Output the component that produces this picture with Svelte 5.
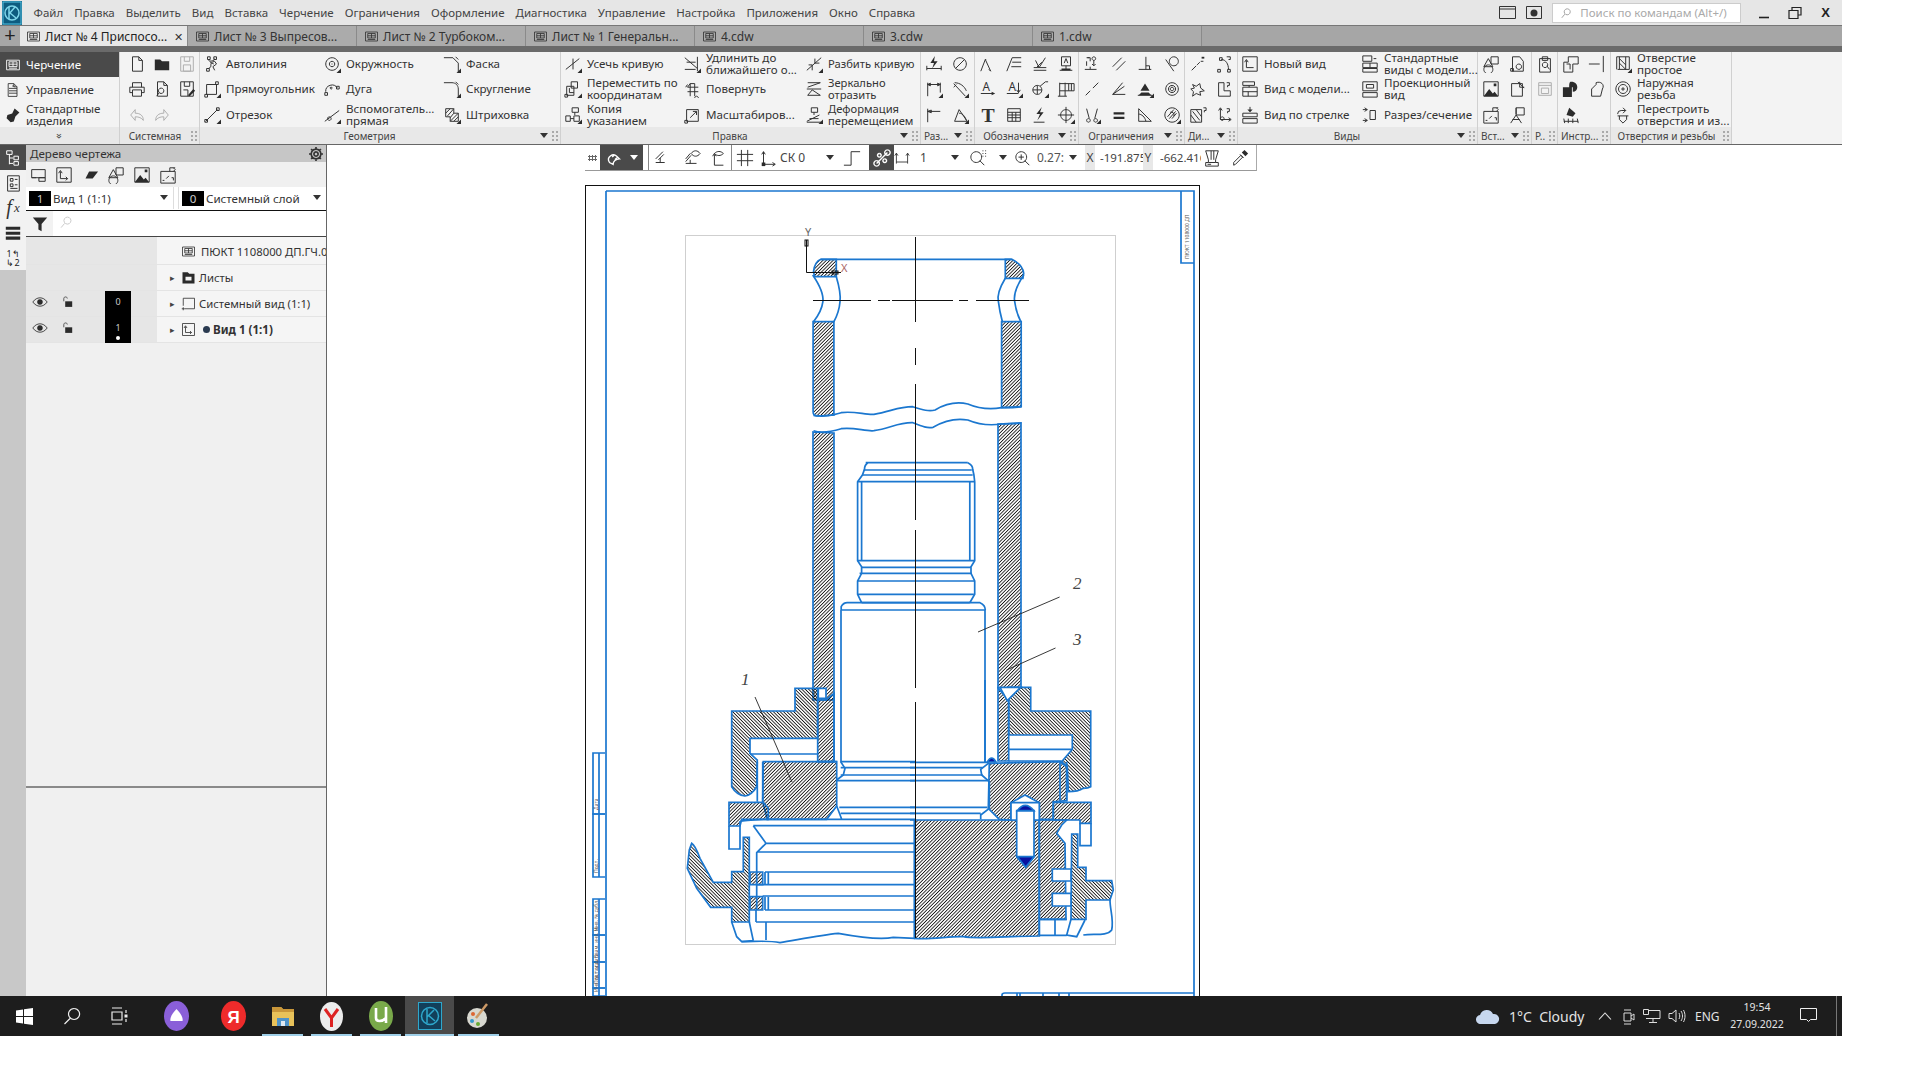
<script>
  const menu = ['Файл','Правка','Выделить','Вид','Вставка','Черчение','Ограничения','Оформление','Диагностика','Управление','Настройка','Приложения','Окно','Справка'];
  const tabs = ['Лист № 4 Приспосо...','Лист № 3 Выпресов...','Лист № 2 Турбоком...','Лист № 1 Генеральн...','4.cdw','3.cdw','1.cdw'];

  // 20x20 icons: s = stroke, f = fill
  const I = {
    sheet:{s:'M2 4h16v12H2zM5 6h10v6H5zM5 9h10M10 6v6M5 14h10'},
    doc:{s:'M4 2h7l4 4v12H4zM9 5h3M5 8h10M5 11h10M5 14h10M11 2v4h4'},
    flash:{f:'M12 2l6 5-5 5-2 6-4 1-5-5 1-4 6-2z'},
    page:{s:'M5 2h7l4 4v12H5zM12 2v4h4'},
    folder:{f:'M2 5h6l2 2h8v10H2z'},
    saveg:{s:'M3 2h14v16H3zM7 2v5h6V2M6 11h8v7H6z',g:1},
    print:{s:'M5 8V3h10v5M5 14H2V8h16v6h-3M5 11h10v7H5z'},
    prev:{s:'M5 2h7l4 4v12H5zM12 2v4h4M9 9a3 3 0 1 0 .1 0M7 14l-3 4'},
    saveas:{s:'M3 2h14v16H3zM7 2v5h6V2M6 11h5v7',f:'M11 17l6-7 2 2-6 6z'},
    undo:{s:'M8 4L3 10l5 6v-4c4 0 7 1 9 4 0-5-3-8-9-8z',g:1},
    redo:{s:'M12 4l5 6-5 6v-4c-4 0-7 1-9 4 0-5 3-8 9-8z',g:1},
    auto:{s:'M5 2h3v3H5zM12 2h3v3h-3zM4 15h3v3H4zM7 5c-3 3 7 2 6-1M6 15c6-2-1-6 7-8l2 3-4 3 2 4M8 8l4 2'},
    rect:{s:'M4 5h11v11H4zM2 16h3v3H2zM14 2h3v3h-3z'},
    seg:{s:'M3 17L16 4M2 15h3v3H2zM15 2h3v3h-3z'},
    circ:{s:'M10 3a7 7 0 1 0 .1 0M10 7a3 3 0 1 0 .1 0M9.5 10h1'},
    arc:{s:'M3 13a7 7 0 0 1 13-4M2 14h3v3H2zM15 7h3v3h-3zM9 8a1 1 0 1 0 .1 0'},
    aux:{s:'M2 17L18 5M7 12a2 2 0 1 0 .1 0'},
    chamfer:{s:'M1 3h10l6 6v10M14 2l3 3'},
    round:{s:'M1 3h9c4 0 7 3 7 7v9M14 2l3 3'},
    hatch:{s:'M3 3h9v5h5v9H8v-5H3zM3 8l5-5M5 11l7-8M8 13l4-5M8 17l9-9M12 17l5-5'},
    trim:{s:'M2 16L17 4M10 4v12',g:0},
    movec:{s:'M8 2h7v7H8zM3 7h8v10H3zM1 16h3v3H1zM6 9v5h5'},
    copy:{s:'M9 2h7v5H9zM12 7v3M2 11h5v6H2zM11 11h6v6h-6zM7 14h4'},
    extend:{s:'M2 3l14 12M2 16h12M16 2v16M4 8h10',},
    rotate:{s:'M8 4h5v14M5 8h12M5 13h12M8 4v14M5 8l3-4M15 18a2 2 0 1 0 .1 0M3 8l2-3'},
    scale:{s:'M4 4h13v13H4zM8 13l7-7M11 6h4v4M2 16h3v3H2z'},
    split:{s:'M2 17L18 3M11 4v5M8 11v6M11 9h5M4 11h4'},
    mirror:{s:'M3 3h14L3 8M3 17h14L8 11zM2 10h16'},
    deform:{s:'M7 2h7v5H7zM10 7v3M2 17l14-7M2 18h16M5 14h10'},
    bolt:{s:'M2 17V12M18 17V12M2 15h16',f:'M11 1L6 9h4l-2 6 6-8h-4z'},
    nope:{s:'M10 3a7 7 0 1 0 .1 0M5 15L15 5'},
    dimh:{s:'M3 18V3M17 14V3M3 5h14M3 5l3-1.500v3zM17 5l-3-1.500v3z'},
    dima:{s:'M3 4l13 14M4 3c6 0 11 4 13 9M3 8l3-3'},
    dimb:{s:'M3 18V3M3 6h14M3 6l4-1.500v3z'},
    dimc:{s:'M4 17l5-13 9 13zM9 8c4 0 7 4 8 8'},
    rough:{s:'M2 18l5-13 6 13M7 5l1 0M13 18l-2-2'},
    lead:{s:'M2 18L8 3h10M8 8h10M7 13h11'},
    tol:{s:'M3 17h14M3 14h14M5 6l4 8L16 3M6 14l6-6'},
    base:{s:'M5 2h10v10H5zM8 9l2-5 2 5M10 12v4M3 17h14',f:'M5 15h10v2H5z'},
    texta:{s:'M2 15h13',f:'M14 13l4 2-4 2z',t:'A'},
    textb:{s:'M2 15h13M15 3v11M13 11l2 3 2-3',f:'',t:'A'},
    weld:{s:'M7 6a5 5 0 1 0 .1 0M2 11h10M7 6v10M10 7l6-5h3'},
    gtol:{s:'M3 18V3M9 18V3M3 4h16v8H3M13 4v8M16 4v8M1 18h10'},
    tt:{t2:'T'},
    table:{s:'M3 3h14v14H3zM3 7h14M3 10h14M3 13h14M8 7v10M12 7v10'},
    lightning:{s:'M3 18h12',f:'M12 1L6 9h4l-3 7 7-9h-4z'},
    target:{s:'M10 4a6 6 0 1 0 .1 0M10 1v18M1 10h18'},
    cfix:{s:'M2 16h13M8 16V13M4 3h4v4M5 3h2M12 2a2 2 0 1 0 .1 0M12 6v6M10 10l2 2 2-2M4 7v5'},
    par:{s:'M3 13L13 3M7 17L17 7'},
    perp:{s:'M11 2v14M3 16h14M11 12h4v4'},
    tan:{s:'M3 5l9 13M12 2a5 5 0 1 0 .1 0'},
    colin:{s:'M3 17l5-5M11 9l6-6'},
    ang:{s:'M3 16h14M3 16L16 7M3 16L14 3'},
    fixp:{s:'M2 17h16',f:'M10 4l5 8H5zM3 17l3-3h8l3 3z'},
    conc:{s:'M10 3a7 7 0 1 0 .1 0M10 6a4 4 0 1 0 .1 0M10 8a2 2 0 1 0 .1 0'},
    sym:{s:'M4 3l3 11M16 3l-3 11M6 14a2 2 0 1 0 .1 0M14 14a2 2 0 1 0 .1 0'},
    eq:{f:'M4 7h12v2.500H4zM4 12h12v2.500H4z'},
    tri:{s:'M3 3v14h14zM3 9c3 0 7 3 8 8'},
    hatchc:{s:'M10 2a8 8 0 1 0 .1 0M5 12L12 4M7 14l7-8M10 14l5-6M8 7a3 3 0 0 1 4 4'},
    dq1:{s:'M3 17l5-5M9 11l3-3M13 7h3',f:'M14 2h3v2h-3z'},
    dq2:{s:'M5 3h3v3H5zM3 16h3v3H3zM14 16h3v3h-3zM7 5c5 0 8 5 8 11M13 2h4v3h-2'},
    dq3:{s:'M4 5l4 2 4-3 1 5 4 3-5 1 1 4-5-2-4 3 1-5-3-3 4-1z'},
    dq4:{s:'M4 3h6v9h7v6H4zM13 3h3v3h-2v2'},
    dq5:{s:'M2 4h12v14H2zM4 6l8 10M2 10l6 8M8 4l6 8M16 2h3v3h-2v2'},
    dq6:{s:'M6 3v12h11M4 5l2-3 2 3M15 13l3 2-3 2M8 12a2 2 0 1 0 .1 0M13 3h3v3h-2v2'},
    nview:{s:'M2 2h16v16H2zM6 6v8h8M4 8l2-3 2 3'},
    vmodel:{s:'M2 2h13v4H2zM9 6v2M2 8h16v10H2zM2 13h16M8 13v5'},
    varrow:{s:'M10 1v5M2 8h16v4H2zM2 14h16v5H2z',f:'M7 4h6l-3 3z'},
    std:{s:'M2 1h10v6H2zM14 4l3 0M2 9h16v5H2zM2 15h16v4H2zM10 9v5'},
    proj:{s:'M2 2h16v10H2zM6 5h8v4H6zM2 14h16v5H2z'},
    sect:{s:'M2 4h5M2 16h5M4 2l3 2-3 2M4 14l3 2-3 2M10 5h6v10h-6z'},
    shapes:{s:'M2 13l5-9 5 9zM10 2h8v8h-8zM7 11a5 5 0 1 0 .1 0'},
    image:{s:'M2 2h16v16H2z',f:'M2 18l6-8 4 5 2-2 4 5zM13 4h3v3h-3z'},
    ins:{s:'M2 6h16v13H2zM12 6V2h6M8 14l3-3M4 16h2M14 13h2v3M16 2l2 2-2 2'},
    leaf:{s:'M5 2h8l4 5v11H5zM3 15h3v3H3zM12 10a3 3 0 1 0 .1 0'},
    frag:{s:'M4 4h12v14H4zM11 2l7 7M13 2v6h5',},
    flag:{s:'M9 2h9v8H9zM9 2v7M3 19l6-9 6 9M5 15h8'},
    clip:{s:'M4 4h12v15H4zM7 2h6v4H7zM10 8a3 3 0 1 0 .1 0M12 12l3 4'},
    grayimg:{s:'M3 3h14v14H3zM3 6h14M6 9h8v6H6z',g:1},
    stepi:{s:'M7 2h11v8h-6v9H2V8h5zM5 10h4v6'},
    linei:{s:'M1 10h12M17 1v18'},
    fill2:{f:'M1 8h10v11H1zM10 2c5 0 7 3 7 6 0 3-2 5-5 5V8H8c0-3 0-6 2-6z'},
    poly:{s:'M4 18V10l5-5V3c5-2 10 2 7 7l-2 8z'},
    fill3:{s:'M2 17h16M2 14l1 5M7 14v5M12 14v5M17 14l1 5',f:'M8 2l7 6-3 4-7-2z'},
    hole:{s:'M3 2h14v14M6 2v14M13 2v14M3 2v14M4 16h13M6 4l7 7M6 9l7 7'},
    thread:{s:'M10 2a8 8 0 1 0 .1 0M10 5a5 5 0 1 0 .1 0M8 10h4M10 8v4'},
    rebuild:{s:'M4 11h12M6 11v4l4 4 4-4v-4M10 2l3 3-3 3M13 5H8a4 4 0 0 0-4 4'},
    tree:{s:'M3 2h6v4H3zM6 6v11M6 10h4M6 16h4M11 8h5v4h-5zM11 14h5v4h-5z'},
    mgr:{s:'M4 2h13v17H4zM7 5h3v3H7zM12 6h3M7 11h3v3H7zM12 12h3M7 16h8'},
    bars:{f:'M2 3h16v3.500H2zM2 8.500h16V12H2zM2 14h16v3.500H2z'},
    vstrip:{s:'M3 4h15v9H3zM11 13h7v4h-7zM3 13h5'},
    plane:{f:'M5 14L9 6h10l-6 8z'},
    lock:{s:'M4 9V5c0-3 5-3 5 0',f:'M6 9h10v8H6z'},
    eye:{s:'M1 10c5-7 13-7 18 0-5 7-13 7-18 0z',f:'M10 6.500a3.500 3.500 0 1 1-.1 0z'},
    sysv:{s:'M3 3h15v14H5M3 3v10M1 17h4M3 15v4'},
    view1:{s:'M2 2h16v16H2zM6 6v8h8M4 8l2-3 2 3M12 12l2 2-2 2'},
    folderi:{f:'M2 3h7l2 2h7v13H2zM6 9v5h8V9z'},
    funnel:{f:'M1 2h18l-7 8v9l-4-2v-7z'},
    search:{s:'M12 3a5 5 0 1 0 .1 0M8 12l-5 6'},
    magnet:{s:'M5 15c-4-6 4-11 8-7l3 3c-4 0-7 3-7 6zM11 6l-3 3M14 9l-3 3',w:1},
    tri2:{s:'M3 15h10M8 15v-5M3 11L11 3M6 12L12 6'},
    eyeline:{s:'M3 16h12M8 16v-4M3 11L8 5M3 14L9 7M9 5c3-4 7-4 10 0-3 4-7 4-10 0z'},
    eyeaxis:{s:'M6 6v12h10M4 8l2-3 2 3M6 5c3-3 7-3 10 0-3 3-7 3-10 0z'},
    grid:{s:'M6 1v18M13 1v18M1 6h18M1 13h18'},
    axes:{s:'M5 3v14h13M3 6l2-3 2 3M15 15l3 2-3 2',f:'M3 15h4v4H3z'},
    stepl:{s:'M1 18h8V3h10'},
    snap:{s:'M4 16L16 4M4 13a3 3 0 1 0 .1 0M16 1a3 3 0 1 0 .1 0M7 5a2 2 0 1 0 .1 0M13 11a2 2 0 1 0 .1 0',w:1},
    snapn:{s:'M3 4v13M17 4v13M1 7l2-3 2 3M15 7l2-3 2 3M3 15h14'},
    zoomw:{s:'M8 3a6 6 0 1 0 .1 0M12 13l5 5M15 2h1M18 2h1M15 5h1M18 5h1M15 8h1M18 8h1'},
    zoomp:{s:'M8 3a6 6 0 1 0 .1 0M12 13l5 5M5 9h6M8 6v6'},
    ruler:{s:'M3 2h14l-3 10v3H6v-3zM6 15H3v4h14v-4h-3M9 2v10M12 2v10M5 17h4'},
    pip:{s:'M3 18l2-1 8-8-2-2-8 8zM10 6l4 4',f:'M12 4l3-3 4 4-3 3z'},
  };

  const groups = [
    {name:'Системная',cols:'25px 25px 25px',w:80,pad:4,items:[['page'],['print'],['undo'],['folder'],['prev'],['redo'],['saveg'],['saveas'],null]},
    {name:'Геометрия',menu:1,cols:'120px 120px 120px',w:361,items:[
      ['auto','Автолиния'],['rect','Прямоугольник',1],['seg','Отрезок',1],
      ['circ','Окружность',1],['arc','Дуга'],['aux','Вспомогатель...\nпрямая',1],
      ['chamfer','Фаска',1],['round','Скругление',1],['hatch','Штриховка',1]]},
    {name:'Правка',menu:1,nrw:1,cols:'119px 122px 119px',w:360,items:[
      ['trim','Усечь кривую',1],['movec','Переместить по\nкоординатам',1],['copy','Копия\nуказанием',1],
      ['extend','Удлинить до\nближайшего о...',1],['rotate','Повернуть'],['scale','Масштабиров...'],
      ['split','Разбить кривую',1],['mirror','Зеркально\nотразить'],['deform','Деформация\nперемещением',1]]},
    {name:'Раз...',menu:1,cols:'26px 26px',w:54,items:[['bolt'],['dimh',0,1],['dimb'],['nope'],['dima',0,1],['dimc',0,1]]},
    {name:'Обозначения',menu:1,cols:'26px 26px 26px 26px',w:104,items:[
      ['rough'],['texta'],['tt'],['lead'],['textb',0,1],['table'],['tol'],['weld',0,1],['lightning'],['base'],['gtol'],['target',0,1]]},
    {name:'Ограничения',menu:1,cols:'26.500px 26.500px 26.500px 26px',w:106,items:[
      ['cfix'],['colin'],['sym',0,1],['par'],['ang'],['eq'],['perp'],['fixp',0,1],['tri'],['tan'],['conc'],['hatchc',0,1]]},
    {name:'Ди...',menu:1,cols:'26px 26px',w:53,items:[['dq1'],['dq3'],['dq5'],['dq2'],['dq4'],['dq6']]},
    {name:'Виды',menu:1,cols:'120px 120px',w:240,items:[
      ['nview','Новый вид'],['vmodel','Вид с модели...'],['varrow','Вид по стрелке'],
      ['std','Стандартные\nвиды с модели...'],['proj','Проекционный\nвид'],['sect','Разрез/сечение']]},
    {name:'Вст...',menu:1,cols:'26px 26px',w:54,items:[['shapes'],['image'],['ins'],['leaf'],['frag'],['flag']]},
    {name:'Р..',cols:'25px',w:26,items:[['clip'],['grayimg'],null]},
    {name:'Инстр...',cols:'26px 26px',w:53,items:[['stepi'],['fill2'],['fill3'],['linei'],['poly'],null]},
    {name:'Отверстия и резьбы',cols:'120px',w:121,items:[['hole','Отверстие\nпростое',1],['thread','Наружная\nрезьба'],['rebuild','Перестроить\nотверстия и из...']]},
  ];

  const rows = [
    {icon:'sheet',label:'ПЮКТ 1108000 ДП.ГЧ.04'},
    {icon:'folderi',label:'Листы',arrow:true},
    {icon:'sysv',label:'Системный вид (1:1)',arrow:true,num:'0'},
    {icon:'view1',label:'Вид 1 (1:1)',arrow:true,num:'1',cur:true},
  ];

  // coordinate helpers: the outline was measured on crops, map it to the sheet
  const T = (d, ox, oy, sx, sy) => d.replace(/([MLHVQCZ])([^MLHVQCZ]*)/g, (m, c, a) => {
    const n = a.trim().split(/[ ,]+/).filter(Boolean).map(Number);
    if (c === 'Z') return 'Z';
    if (c === 'H') return 'H' + (ox + n[0] / sx).toFixed(1);
    if (c === 'V') return 'V' + (oy + n[0] / sy).toFixed(1);
    return c + n.map((v, i) => (i % 2 ? oy + v / sy : ox + v / sx).toFixed(1)).join(' ');
  });
  const z5 = d => T(d, 580, 180, 2.45, 3);
  const z9 = d => T(d, 680, 680, 3, 3);
  const z10 = d => T(d, 910, 680, 3, 3);

  const H1 = 'url(#ha)', H2 = 'url(#hb)';
  const shapes = [
    // upper tube
    [z5('M572 275 Q575 245 590 238 L628 238 L628 290 L575 290 Z'),H1],
    [z5('M1042 238 L1058 238 Q1085 255 1087 280 L1085 295 L1042 295 Z'),H1],
    [z5('M571 425 L622 425 L622 705 L580 708 Q571 706 571 695 Z'),H1],
    [z5('M1033 425 L1081 425 L1081 680 L1060 683 L1033 683 Z'),H1],
    ['M813 432 L834 433 V700 H813 Z',H1],
    ['M998 424 L1021 423 V688 H998 Z',H1],
    // cap, left
    [z9('M345 25 L413 25 L413 175 L210 175 L210 220 L232 240 L230 320 Q215 345 195 348 Q170 345 155 320 L155 93 L345 93 Z'),H2],
    [z9('M413 60 L438 60 L462 40 L462 245 L413 245 Z'),H1],
    [z9('M250 245 L470 245 L470 378 L440 418 L262 418 L248 365 Z'),H1],
    [z9('M147 367 L250 367 L265 385 L265 418 L185 418 L180 438 L147 438 Z'),H1],
    [z9('M35 490 Q45 495 60 535 L100 607 L155 607 L155 575 L190 575 L190 472 L208 472 L208 726 L155 726 L155 682 L92 682 L50 625 L22 565 L28 510 Z'),H2],
    [z9('M210 576 H248 V614 H210 Z'),H1],
    [z9('M210 650 H248 V690 H210 Z'),H1],
    // right half
    [z10('M13 420 H388 V768 C300 768 200 778 160 770 C120 768 60 780 13 775 Z'),H1],
    [z10('M238 250 L450 245 L470 260 L470 362 L430 365 L430 418 L388 418 L388 368 L345 345 L303 368 L303 420 L268 418 L235 385 Z'),H1],
    [z10('M388 420 H470 L455 435 L440 460 L465 490 L468 718 L388 718 Z'),H1],
    [z10('M296 22 L362 22 L362 93 L542 93 L542 320 Q535 325 520 325 Q505 335 475 335 L472 260 L455 245 L487 208 L487 165 L296 165 Z'),H2],
    [z10('M264 25 L296 60 L296 243 L264 243 Z'),H1],
    [z10('M430 367 H543 V430 H510 V420 H430 Z'),H1],
    [z10('M485 462 H503 V562 H528 V602 H605 L610 630 L600 660 H528 V718 H483 Z'),H2],
    [z10('M303 368 H388 V420 H303 Z'),'#fff'],
    [z10('M320 392 H372 V530 L347 560 L320 530 Z'),'#fff'],
    [z10('M427 567 H483 V603 H427 Z'),'#fff'],
    [z10('M427 640 H483 V678 H427 Z'),'#fff'],
    [z10('M322 392 Q345 360 372 392 Z'),'#0a12a0'],
    [z10('M322 530 H372 L347 562 Z'),'#0a12a0'],
    [z10('M232 246 Q245 222 258 246 Z'),'#0a12a0'],
    [z10('M270 22 H332 L292 62 Z'),'#fff'],
    [z9('M415 25 H438 V55 H415 Z'),'#fff'],
  ];

  const lines = [
    z5('M590 238 L1058 238'),
    z5('M570 285 Q598 335 595 365 Q592 395 572 425'),
    z5('M628 290 Q640 340 637 365 Q635 395 622 425'),
    z5('M1087 285 Q1060 335 1065 365 Q1068 395 1080 425'),
    z5('M1042 295 Q1020 340 1025 365 Q1028 395 1035 425'),
    z5('M572 706 C600 712 620 705 640 698 C670 692 700 705 720 703 C760 695 780 680 815 680 C840 690 855 695 870 690 C900 668 925 665 950 672 C975 685 1000 690 1033 683 L1081 680'),
    z5('M572 752 C590 760 610 757 640 746 C670 740 700 755 720 752 C760 745 780 727 815 728 C840 740 850 745 865 742 C895 720 925 715 950 720 C975 733 1000 738 1033 732 L1081 730'),
    // shaft
    z5('M700 848 H950 M695 870 H960 M692 885 H962 M680 905 H967 M680 1142 H967 M690 1162 H958 M685 1180 H960 M680 1203 H967 M680 1243 H965 M690 1268 H955'),
    z5('M705 848 Q697 855 697 868 L692 885 L680 905 L680 1142 L690 1160 L690 1180 L680 1203 L680 1243 L690 1268'),
    z5('M950 848 Q962 855 962 868 L965 885 L967 905 L967 1142 L958 1160 L958 1180 L967 1203 L967 1243 L955 1268'),
    z5('M690 905 V1142 M955 905 V1142'),
    z5('M640 1290 L640 1280 Q645 1268 655 1268 L980 1268 Q993 1275 993 1290'),
    z5('M640 1290 H993'),
    'M841 610 V762 M985 610 V762',
    // left lower
    z9('M210 222 H413 M413 245 H470 M462 40 L462 245'),
    z9('M232 245 V365 M248 245 V365'),
    z9('M482 245 H705 M482 263 H705 M482 285 H705 M470 302 H705'),
    z9('M482 245 L495 265 L490 285 L470 300'),
    z9('M478 382 H705 M482 400 H705 M260 418 H705 M470 378 L485 418'),
    z9('M147 438 V507 H180 V425 Q190 420 262 418'),
    z9('M220 437 H705 M220 437 L258 490 L230 518 V690 M258 490 H705 M232 516 H705 M255 576 H705 M232 614 H705 M248 648 H705 M255 690 H705 M228 726 H705'),
    z9('M255 576 V614 M265 576 V614 M255 650 V690 M265 650 V690 M228 690 V726'),
    z9('M155 726 L170 770 L185 785 L220 782 M208 726 L220 782 M258 726 V780'),
    z9('M185 785 C230 785 260 780 300 788 C350 780 420 765 475 760 C530 770 600 780 640 772 L705 775'),
    // right lower
    z10('M225 0 V245 M0 247 H235 M0 263 H218 M0 285 H218 M0 302 H235'),
    z10('M238 248 L212 268 L215 285 L238 305 V385 L212 405 V418 M0 382 H232 M0 400 H212 M0 420 H13'),
    z10('M296 243 H455 M296 208 H487 M450 245 V362 M470 245 V362'),
    z10('M510 430 V497 H543 V430'),
    z10('M388 718 V766 M435 718 V766 M388 718 H470 M483 718 L470 765 L500 770 L525 720'),
    z10('M388 766 H470 M520 765 C550 760 590 770 605 750 C612 720 600 690 600 660'),
  ];

  const centre = [[237,322],[348,365],[384,520],[530,688],[702,938]];
  const cross = [[813,871],[878,890],[892,953],[959,968],[976,1029]];
  const stampL = [[753,814],[814,877],[899,935],[935,962],[962,988],[988,996]];
  const stampT = ['Дата','Подп.','Инв. № дубл.','Взам. инв. №','Подп. и дата','Инв. № подл.'];

  const tasks = [
    {x:'alice',w:48,ml:8},{x:'ya',w:48,ml:9,u:0},{x:'files',w:49,ml:1,u:1},{x:'yb',w:49,u:1},{x:'ut',w:49,u:1},{x:'ko',w:49,u:1,act:1},{x:'paint',w:49,u:1}
  ];
</script>

{#snippet ic(name, corner = 0, size = 18)}
  {@const o = I[name]}
  <span class="ic" class:grayed={o?.g}>
    <svg width={size} height={size} viewBox="0 0 20 20">
      {#if name === 'tt'}
        <text x="10" y="18" text-anchor="middle" class="bigt">T</text>
      {:else}
        {#if o.t}<text x="8" y="12" text-anchor="middle" class="smallt">{o.t}</text>{/if}
        {#if o.s}<path d={o.s} class="st" class:wh={o.w} />{/if}
        {#if o.f}<path d={o.f} class="fl" />{/if}
      {/if}
      {#if corner}<path d="M20 15v5h-5z" class="fl" />{/if}
    </svg>
  </span>
{/snippet}

{#snippet grip()}
  <svg class="grip" width="6" height="11" viewBox="0 0 6 11">
    <path d="M0 1h2v2H0zM4 1h2v2H4zM0 5h2v2H0zM4 5h2v2H4zM0 9h2v2H0zM4 9h2v2H4z" />
  </svg>
{/snippet}

<div class="app">
  <header class="menubar">
    <svg class="logo" width="20" height="24" viewBox="0 0 20 24">
      <rect width="20" height="24" fill="#0e5c80" />
      <rect x="1" y="1" width="18" height="22" fill="none" stroke="#54c2e2" />
      <circle cx="10" cy="12" r="7" fill="none" stroke="#7fd6ea" stroke-width="1.500" />
      <path d="M7 6v12M7 13l6-7M8 12l6 5" fill="none" stroke="#7fd6ea" stroke-width="1.500" />
    </svg>
    <nav class="menu">
      {#each menu as m}<span>{m}</span>{/each}
    </nav>
    <div class="wintools">
      <svg class="wi" width="18" height="14" viewBox="0 0 18 14"><path d="M.5.500h16v12H.5zM.5 3h16" fill="none" stroke="#333" /></svg>
      <svg class="wi2" width="16" height="14" viewBox="0 0 16 14"><path d="M.5.500h15v12H.5z" fill="none" stroke="#333" /><circle cx="8" cy="7" r="3.500" fill="#333" /></svg>
      <div class="cmd">
        <svg width="12" height="12" viewBox="0 0 20 20"><path d="M12 3a5 5 0 1 0 .1 0M8 12l-5 6" fill="none" stroke="#999" stroke-width="1.500" /></svg>
        <span>Поиск по командам (Alt+/)</span>
      </div>
      <svg class="winb" width="12" height="12" viewBox="0 0 12 12"><path d="M1 10.500h10" stroke="#222" stroke-width="1.600" /></svg>
      <svg class="winb" width="14" height="14" viewBox="0 0 14 14"><path d="M1 4.500h9v8H1zM4 4V1.500h9V9h-3" fill="none" stroke="#222" stroke-width="1.200" /></svg>
      <span class="x">X</span>
    </div>
  </header>

  <div class="tabs">
    <span class="plus">+</span>
    {#each tabs as t, i}
      <div class="tab" class:active={i === 0}>
        {@render ic('sheet', 0, 15)}
        <span class="tlabel">{t}</span>
        {#if i === 0}<span class="tclose">✕</span>{/if}
      </div>
    {/each}
    <div class="tabrest"></div>
  </div>
  <div class="strip"></div>

  <section class="ribbon">
    <div class="modes">
      <div class="modebody">
        <div class="mode sel">{@render ic('sheet', 0, 16)}<span>Черчение</span></div>
        <div class="mode">{@render ic('doc', 0, 16)}<span>Управление</span></div>
        <div class="mode">{@render ic('flash', 0, 16)}<span>Стандартные<br />изделия</span></div>
      </div>
      <div class="rlabel center"><span class="chev">»</span></div>
    </div>
    {#each groups as g}
      <div class="group" class:only={!g.items.some(i => i && i[1])} style="width:{g.w}px">
        <div class="gbody" class:nrw={g.nrw} style="grid-template-columns:{g.cols};padding-left:{g.pad ?? 0}px">
          {#each g.items as it}
            {#if it}
              <div class="item">
                {@render ic(it[0], it[2] || 0)}
                {#if it[1]}<span class="ilabel">{it[1]}</span>{/if}
              </div>
            {:else}
              <div></div>
            {/if}
          {/each}
        </div>
        <div class="rlabel">
          <span class="gname" class:tight={g.w < 60}>{g.name}</span>
          {#if g.menu}<span class="drop"></span>{/if}
          {@render grip()}
        </div>
      </div>
    {/each}
    <div class="ribrest"></div>
  </section>

  <main class="work">
    <aside class="vstrip">
      <button class="vb on">{@render ic('tree', 0, 18)}</button>
      <button class="vb">{@render ic('mgr', 0, 18)}</button>
      <button class="vb fx"><i>f</i><sub>x</sub></button>
      <button class="vb">{@render ic('bars', 0, 18)}</button>
      <button class="vb num"><span>1↰</span><span>↳2</span></button>
    </aside>

    <aside class="panel">
      <div class="ptop">
        <div class="ptitle"><span>Дерево чертежа</span>
          <svg width="14" height="14" viewBox="0 0 20 20"><path d="M10 3a7 7 0 1 0 .1 0M10 7a3 3 0 1 0 .1 0M10 0v3M10 17v3M0 10h3M17 10h3M3 3l2 2M15 15l2 2M3 17l2-2M15 5l2-2" fill="none" stroke="#333" stroke-width="2.400" /></svg>
        </div>
        <div class="ptools">
          {@render ic('vstrip')}{@render ic('view1')}{@render ic('plane')}{@render ic('shapes')}{@render ic('image')}{@render ic('ins')}
        </div>
        <div class="pdrops">
          <div class="dd first"><b>1</b><span>Вид 1 (1:1)</span><i></i></div>
          <div class="dd second"><b>0</b><span>Системный слой</span><i></i></div>
        </div>
        <div class="pfilter">
          <span class="fun">{@render ic('funnel', 0, 16)}</span>
          <span class="fmag">{@render ic('search', 0, 14)}</span>
        </div>
        <div class="tlist">
          {#each rows as r, i}
            <div class="trow">
              <div class="tleft">
                {#if r.num}
                  <span class="ey">{@render ic('eye', 0, 16)}</span>
                  <span class="lk">{@render ic('lock', 0, 14)}</span>
                  <span class="nm" class:c={r.cur}>{r.num}{#if r.cur}<em></em>{/if}</span>
                {/if}
              </div>
              <div class="tright">
                {#if r.arrow}<span class="arr">▸</span>{:else}<span class="arr"></span>{/if}
                {@render ic(r.icon, 0, 15)}
                {#if r.cur}<span class="dot"></span>{/if}
                <span class="tname" class:b={r.cur} class:top={i === 0}>{r.label}</span>
              </div>
            </div>
          {/each}
        </div>
      </div>
      <div class="pbot"></div>
    </aside>

    <div class="canvas">
      <svg class="sheet" width="1515" height="851" viewBox="327 145 1515 851">
        <defs>
          <pattern id="ha" patternUnits="userSpaceOnUse" width="2.400" height="2.400" patternTransform="rotate(45)">
            <rect width="0.85" height="2.400" fill="#111" />
          </pattern>
          <pattern id="hb" patternUnits="userSpaceOnUse" width="2.400" height="2.400" patternTransform="rotate(-45)">
            <rect width="0.85" height="2.400" fill="#111" />
          </pattern>
        </defs>

        <rect x="585.500" y="185.500" width="614" height="830" class="black" />
        <path d="M606 191H1194V1010M606 191V1010" class="blue nf" />
        <path d="M1181 191V263H1194" class="blue nf" />
        <text class="tiny" transform="translate(1189,259) rotate(-90)">ПЮКТ 1108000 ДП</text>
        <rect x="685.500" y="235.500" width="430" height="709" class="frame" />

        {#each stampL as s, i}
          <path d="M605 {s[0]}H593V{s[1]}H605M599 {s[0]}V{s[1]}" class="blue nf" />
          <text class="tiny" transform="translate(597.500,{s[1] - 4}) rotate(-90)">{stampT[i]}</text>
        {/each}
        <path d="M1002 1000V995Q1002 993 1005 993H1194M1017 993V998M1020 993V998M1043 993V998M1059 993V998M1069 993V998" class="blue nf" />

        {#each shapes as [d, fill]}
          <path {d} {fill} class="blue" />
        {/each}
        {#each lines as d}
          <path {d} class="blue nf" />
        {/each}

        {#each centre as [a, b]}
          <path d="M915.500 {a}V{b}" class="ax" />
        {/each}
        {#each cross as [a, b]}
          <path d="M{a} 300.500H{b}" class="ax" />
        {/each}

        <path d="M1059.600 597L978 632M1055.500 648L1006.500 670M755 697L792 782" class="leader" />
        <path d="M806.500 240V272.500H841" class="ax" />
        <rect x="805" y="240" width="3" height="6" class="ax" />
        <rect x="832" y="271" width="6" height="3" class="ax" />
        <text x="805" y="236" class="axt">Y</text>
        <text x="841" y="272" class="axt r">X</text>
        <text x="1073" y="589" class="num">2</text>
        <text x="1073" y="645" class="num">3</text>
        <text x="741" y="685" class="num">1</text>
      </svg>

      <div class="floatbar">
        <span class="dots"></span>
        <div class="dark mg">{@render ic('magnet', 0, 18)}<i class="wtri"></i></div>
        <span class="sep s1"></span>
        <span class="tb b1">{@render ic('tri2')}</span>
        <span class="tb b2">{@render ic('eyeline')}</span>
        <span class="tb b3">{@render ic('eyeaxis')}</span>
        <span class="sep s2"></span>
        <span class="tb b4">{@render ic('grid')}</span>
        <span class="tb b5">{@render ic('axes')}</span>
        <span class="fld sk">СК 0<i class="tr"></i></span>
        <span class="tb b6">{@render ic('stepl')}</span>
        <div class="dark sn">{@render ic('snap', 0, 18)}</div>
        <span class="tb b7">{@render ic('snapn', 0, 16)}</span>
        <span class="fld one">1<i class="tr"></i></span>
        <span class="tb b8">{@render ic('zoomw')}</span>
        <i class="tr solo"></i>
        <span class="tb b9">{@render ic('zoomp')}</span>
        <span class="fld zv"><em>0.27:</em><i class="tr"></i></span>
        <span class="lab">X</span>
        <span class="val xv">-191.875</span>
        <span class="lab y">Y</span>
        <span class="val yv">-662.416</span>
        <span class="tb b10">{@render ic('ruler')}</span>
        <span class="tb b11">{@render ic('pip')}</span>
      </div>
    </div>
  </main>

  <footer class="taskbar">
    <div class="cell">
      <svg width="17" height="17" viewBox="0 0 17 17"><path d="M0 2.500l7-1v6.500H0zM8 1.300L17 0v8H8zM0 9h7v6.500l-7-1zM8 9h9v8l-9-1.300z" fill="#fff" /></svg>
    </div>
    <div class="cell">
      <svg width="18" height="18" viewBox="0 0 18 18"><path d="M11 1.500a5.500 5.500 0 1 0 .1 0M7 11.500L1.500 17" fill="none" stroke="#eee" stroke-width="1.200" /></svg>
    </div>
    <div class="cell">
      <svg width="18" height="18" viewBox="0 0 18 18"><path d="M1 1h10M1 17h10M1 5h10v8H1zM15 3v3M15 12v3" fill="none" stroke="#eee" stroke-width="1.200" /><rect x="13.500" y="7.500" width="3" height="3" fill="#eee" /></svg>
    </div>
    {#each tasks as t}
      <div class="cell" class:act={t.act} class:und={t.u} style="width:{t.w}px;margin-left:{t.ml ?? 0}px">
        {#if t.x === 'alice'}
          <svg width="25" height="30" viewBox="0 0 25 30"><ellipse cx="12.500" cy="15" rx="12.500" ry="15" fill="#8a5fd8" /><path d="M12.500 8c-4 4-7 9-6 12h12c1-3-2-8-6-12z" fill="#fff" /></svg>
        {:else if t.x === 'ya'}
          <svg width="25" height="30" viewBox="0 0 25 30"><ellipse cx="12.500" cy="15" rx="12.500" ry="15" fill="#ee2b2b" /><text x="12.500" y="22" text-anchor="middle" class="tkt">Я</text></svg>
        {:else if t.x === 'files'}
          <svg width="22" height="22" viewBox="0 0 22 22"><path d="M0 2h9l2 2h11v17H0z" fill="#e8c25a" /><path d="M0 2h9l2 2h11v3H0z" fill="#c9973a" /><path d="M5 13h12v8H5z" fill="#4f93c9" /><path d="M9 16h4v5H9z" fill="#dfe8f0" /></svg>
        {:else if t.x === 'yb'}
          <svg width="23" height="29" viewBox="0 0 23 29"><ellipse cx="11.500" cy="14.500" rx="11.500" ry="14.500" fill="#ececec" /><path d="M5 7l6.500 9L18 7M11.500 16v9" fill="none" stroke="#d22" stroke-width="3" /></svg>
        {:else if t.x === 'ut'}
          <svg width="24" height="30" viewBox="0 0 24 30"><ellipse cx="12" cy="15" rx="12" ry="15" fill="#79a94a" /><path d="M7 7v10c0 4 6 4 10 0M17 6v16" fill="none" stroke="#fff" stroke-width="2.600" /></svg>
        {:else if t.x === 'ko'}
          <svg width="24" height="28" viewBox="0 0 24 28"><rect x=".5" y=".5" width="23" height="27" fill="#123f5a" stroke="#2ea7cc" /><circle cx="12" cy="14" r="8.500" fill="none" stroke="#2ea7cc" stroke-width="1.500" /><path d="M9 7v14M9 15l7-7M10 13l7 6" fill="none" stroke="#2ea7cc" stroke-width="1.500" /></svg>
        {:else}
          <svg width="24" height="30" viewBox="0 0 24 30"><ellipse cx="10" cy="17" rx="10" ry="10" fill="#d8d8d0" /><circle cx="6" cy="13" r="2" fill="#d63" /><circle cx="5" cy="20" r="2" fill="#39c" /><circle cx="11" cy="23" r="2" fill="#6a3" /><path d="M9 17L20 3" stroke="#c96" stroke-width="2.500" /></svg>
        {/if}
      </div>
    {/each}

    <div class="tray">
      <svg class="cloud" width="24" height="16" viewBox="0 0 24 16"><path d="M5 16a4.500 4.500 0 0 1-1-9 7 7 0 0 1 13-1 5 5 0 0 1 2 10z" fill="#c7d7ee" /></svg>
      <span class="wtxt">1°C&nbsp; Cloudy</span>
      <svg class="tr1" width="14" height="8" viewBox="0 0 14 8"><path d="M1 7.500L7 1l6 6.500" fill="none" stroke="#ddd" stroke-width="1.100" /></svg>
      <svg class="tr2" width="13" height="17" viewBox="0 0 13 17"><path d="M2 5h7v8H2zM9 8l3-2v6l-3-2M2 2h7M2 16h7" fill="none" stroke="#ddd" /></svg>
      <svg class="tr3" width="18" height="14" viewBox="0 0 18 14"><path d="M5 1.500h12v8H3M.5.500h5v5h-5zM10 9.500v4M6 13.500h8" fill="none" stroke="#ddd" /></svg>
      <svg class="tr4" width="18" height="14" viewBox="0 0 18 14"><path d="M1 4.500h3L8 1v12L4 9.500H1zM11 4c1 2 1 4 0 6M13 2c2 3 2 7 0 10M15.500 1c2 4 2 8 0 12" fill="none" stroke="#ddd" /></svg>
      <span class="eng">ENG</span>
      <div class="clock"><span>19:54</span><span>27.09.2022</span></div>
      <svg class="note" width="17" height="16" viewBox="0 0 17 16"><path d="M.5.500h16v11h-6l-2 2-2-2h-6z" fill="none" stroke="#eee" /></svg>
      <span class="edge"></span>
    </div>
  </footer>
</div>

<style>
  :global(body) { background: #fff; font-family: "Noto Sans", "Open Sans", sans-serif; }
  .app { width: 1842px; height: 1036px; display: flex; flex-direction: column; font-size: 11.600px; color: #333; overflow: hidden; }
  .menubar { height: 25px; background: #e6e6e6; display: flex; align-items: center; position: relative; flex: none; }
  .logo { margin-left: 2px; flex: none; }
  .menu { display: flex; gap: 11px; margin-left: 11.500px; color: #444; font-size: 11.500px; }
  .wintools { margin-left: auto; display: flex; align-items: center; }
  .wi2 { margin-left: 9px; }
  .cmd { width: 189px; height: 20px; box-sizing: border-box; background: #fff; border: 1px solid #ccc; margin-left: 10px; display: flex; align-items: center; gap: 8px; padding-left: 7px; color: #aaa; font-size: 11.500px; }
  .winb { margin-left: 17px; }
  .winb + .winb { margin-left: 18px; }
  .x { font: bold 13px "Liberation Sans", sans-serif; color: #222; margin: 0 12px 0 19px; }

  .tabs { height: 21px; background: #a6a6a6; display: flex; border-top: 1px solid #777; box-sizing: border-box; flex: none; font-size: 12px; }
  .plus { width: 20px; text-align: center; font-size: 20px; line-height: 18px; color: #222; background: #a6a6a6; }
  .tab { width: 169px; flex: none; box-sizing: border-box; display: flex; align-items: center; padding-left: 7px; gap: 4px; border-right: 1px solid #8a8a8a; background: #ababab; }
  .tab.active { background: #e8e8e8; color: #222; width: 168px; padding-left: 6px; }
  .tclose { margin-left: auto; margin-right: 4px; font-size: 11px; color: #333; }
  .tlabel { white-space: nowrap; }
  .tabrest { flex: 1; background: #a6a6a6; }
  .strip { height: 6px; background: #6a6a6a; flex: none; position: relative; z-index: 0; }

  .ribbon { height: 93px; display: flex; background: #f3f3f3; border-bottom: 1px solid #666; box-sizing: border-box; flex: none; }
  .modes { width: 120px; flex: none; display: flex; flex-direction: column; border-right: 1px solid #d0d0d0; box-sizing: border-box; }
  .modebody { height: 75px; }
  .mode { height: 25px; display: flex; align-items: center; gap: 5px; padding-left: 5px; line-height: 12px; }
  .mode.sel { background: #4a4a4a; color: #fff; }
  .mode.sel :global(.st) { stroke: #fff; }
  .rlabel { height: 17px; background: #e8e8e8; display: flex; align-items: center; font-size: 10px; color: #444; padding: 0 2px 0 3px; box-sizing: border-box; gap: 4px; flex: none; }
  .rlabel.center { justify-content: center; }
  .chev { transform: rotate(90deg); font-size: 11px; line-height: 10px; }
  .group { flex: none; display: flex; flex-direction: column; border-right: 1px solid #d0d0d0; box-sizing: border-box; }
  .gbody { height: 75px; display: grid; grid-template-rows: repeat(3, 25.500px); grid-auto-flow: column; transform: translateY(-1px); }
  .item { display: flex; align-items: center; min-width: 0; }
  .item > :global(.ic) { width: 24px; margin-right: 2px; }
  .only .item > :global(.ic) { width: 100%; margin: 0; }
  .ilabel { white-space: pre; line-height: 12px; font-size: 11.600px; color: #333; }
  .nrw .item:nth-child(n+7) .ilabel { font-size: 11.200px; }
  .gname { flex: 1; text-align: center; white-space: nowrap; }
  .gname.tight { text-align: left; }
  .drop { width: 0; height: 0; border-left: 4px solid transparent; border-right: 4px solid transparent; border-top: 5px solid #333; }
  .grip { fill: #aaa; flex: none; }
  .ribrest { flex: 1; }

  .ic { display: inline-flex; align-items: center; justify-content: center; flex: none; line-height: 0; }
  .ic.grayed { opacity: .35; }
  .st { fill: none; stroke: #333; stroke-width: 1.100; }
  .st.wh { stroke: #fff; stroke-width: 2; }
  .fl { fill: #2b2b2b; }
  .bigt { font: bold 22px "Liberation Serif", serif; fill: #333; }
  .smallt { font: 13px "Noto Sans", sans-serif; fill: #333; }

  .work { flex: 1; display: flex; min-height: 0; }
  .vstrip { width: 26px; flex: none; background: #c8c8c8; display: flex; flex-direction: column; }
  .vb { height: 25px; border: 0; padding: 0; background: #f2f2f2; display: flex; align-items: center; justify-content: center; flex: none; }
  .vb.on { height: 25px; background: #4a4a4a; }
  .vb.on :global(.st) { stroke: #fff; }
  .vb.fx { font: italic 18px "Liberation Serif", serif; color: #333; }
  .vb.fx i { font-size: 20px; }
  .vb.fx sub { font-size: 13px; line-height: 0; margin-left: 2px; }
  .vb.num { font: 9px "Noto Sans", sans-serif; flex-direction: column; line-height: 9px; color: #222; }

  .panel { width: 301px; flex: none; box-sizing: border-box; border-right: 1px solid #666; background: #f0f0f0; display: flex; flex-direction: column; }
  .ptop { height: 643px; border-bottom: 2px solid #8a8a8a; box-sizing: border-box; flex: none; }
  .ptitle { height: 17px; background: #c6c6c6; display: flex; align-items: center; justify-content: space-between; padding: 0 3px 0 4px; color: #333; }
  .ptools { height: 25px; display: flex; align-items: center; gap: 8px; padding-left: 3px; background: #f0f0f0; }
  .pdrops { height: 24px; display: flex; background: #fff; border-bottom: 1px solid #111; box-sizing: border-box; }
  .dd { display: flex; align-items: center; height: 22px; gap: 1px; position: relative; box-sizing: border-box; }
  .dd.first { width: 148px; padding-left: 3px; border-right: 1px solid #ddd; }
  .dd.second { flex: 1; padding-left: 3px; margin-left: 4px; border-left: 1px solid #ddd; }
  .dd b { background: #000; color: #ccc; width: 22px; height: 15px; font-weight: 400; text-align: center; line-height: 15px; }
  .dd span { margin-left: 1px; color: #333; }
  .dd i { position: absolute; right: 5px; top: 8px; border-left: 4px solid transparent; border-right: 4px solid transparent; border-top: 5px solid #333; }
  .pfilter { height: 26px; display: flex; align-items: center; background: #fff; border-bottom: 1px solid #444; box-sizing: border-box; }
  .fun { width: 27px; height: 25px; display: flex; align-items: center; justify-content: center; background: #f2f2f2; }
  .fmag { margin-left: 6px; }
  .fmag :global(.st) { stroke: #bbb; }
  .tlist { padding-top: 2px; background: linear-gradient(#e6e6e6, #e6e6e6) 0 0 / 131px 2px no-repeat, linear-gradient(#f5f5f5, #f5f5f5) 131px 0 / 100% 2px no-repeat; }
  .trow { height: 26px; display: flex; border-bottom: 1px solid #e4e4e4; box-sizing: border-box; }
  .tleft { width: 131px; flex: none; background: #e6e6e6; position: relative; display: flex; align-items: center; }
  .tright { flex: 1; display: flex; align-items: center; background: #f5f5f5; min-width: 0; overflow: hidden; white-space: nowrap; }
  .ey { margin-left: 6px; }
  .lk { margin-left: 13px; }
  .nm { position: absolute; left: 79px; top: 0; width: 26px; height: 26px; background: #000; color: #ccc; text-align: center; font-size: 9px; line-height: 22px; }
  .nm em { position: absolute; left: 11px; top: 19px; width: 4px; height: 4px; border-radius: 50%; background: #fff; }
  .arr { width: 24px; text-align: right; padding-right: 6px; box-sizing: border-box; font-size: 9px; color: #444; flex: none; }
  .tname { margin-left: 3px; color: #333; font-size: 11.300px; }
  .tname.top { margin-left: 5px; }
  .tname.b { font-weight: 700; margin-left: 3px; font-size: 11.600px; }
  .dot { width: 7px; height: 7px; border-radius: 50%; background: #2a3a50; margin-left: 7px; }
  .pbot { flex: 1; }

  .canvas { flex: 1; position: relative; background: #fff; overflow: hidden; min-width: 0; }
  .sheet { display: block; }
  .black { fill: none; stroke: #111; stroke-width: 1; }
  .frame { fill: none; stroke: #cfcfcf; stroke-width: 1; }
  .blue { stroke: #1b77cf; stroke-width: 1.700; }
  .nf { fill: none; }
  .ax { fill: none; stroke: #111; stroke-width: 1; }
  .leader { fill: none; stroke: #222; stroke-width: .9; }
  .axt { font: 11px "Noto Sans", sans-serif; fill: #666; }
  .axt.r { fill: #a66; }
  .num { font: italic 17px "Liberation Serif", serif; fill: #444; }
  .tiny { font: 5px "Noto Sans", sans-serif; fill: #555; }

  .floatbar { position: absolute; left: 258px; top: 0; width: 672px; height: 26px; box-sizing: border-box; background: #fff; border-bottom: 1px solid #999; border-right: 1px solid #aaa; display: flex; align-items: center; font-size: 12px; }
  .floatbar > * { flex: none; }
  .dots { width: 9px; height: 6px; margin: 0 3px; background: radial-gradient(circle, #666 1px, transparent 1.100px) 0 0 / 3px 3px; }
  .dark { background: #4a4a4a; height: 100%; display: flex; align-items: center; justify-content: center; }
  .dark.mg { width: 43px; gap: 7px; }
  .dark.sn { width: 25px; margin-left: 2px; }
  .dark :global(.st) { stroke: #fff; stroke-width: 1.500; }
  .wtri { border-left: 4px solid transparent; border-right: 4px solid transparent; border-top: 5px solid #fff; }
  .sep { width: 1px; height: 100%; background: #888; }
  .s1 { margin-left: 5px; }
  .s2 { margin-left: 4px; }
  .tb { display: flex; justify-content: center; align-items: center; }
  .b1 { width: 26px; } .b2 { width: 34px; } .b3 { width: 18px; } .b4 { width: 26px; } .b5 { width: 20px; }
  .b6 { width: 30px; margin-left: 3px; } .b7 { width: 16px; } .b8 { width: 38px; } .b9 { width: 26px; margin-left: 3px; }
  .b10 { width: 22px; } .b11 { width: 34px; }
  .fld { display: flex; align-items: center; color: #444; justify-content: space-between; box-sizing: border-box; }
  .fld em { font-style: normal; color: #555; }
  .sk { width: 54px; margin-left: 2px; }
  .one { width: 39px; margin-left: 10px; }
  .zv { width: 40px; margin-left: 1px; }
  .tr { border-left: 4px solid transparent; border-right: 4px solid transparent; border-top: 5px solid #333; display: block; }
  .solo { margin-left: 2px; }
  .lab { background: #e8e8e8; width: 10px; height: 100%; text-align: center; line-height: 25px; margin-left: 8px; color: #444; }
  .lab.y { margin-left: 0; }
  .val { overflow: hidden; white-space: nowrap; margin-left: 5px; color: #444; font-size: 11.500px; }
  .xv { width: 43px; }
  .yv { width: 41px; margin-left: 7px; }

  .taskbar { height: 40px; background: #1d1d1d; display: flex; align-items: center; flex: none; }
  .cell { width: 48px; height: 40px; display: flex; align-items: center; justify-content: center; flex: none; box-sizing: border-box; position: relative; }
  .cell.act { background: #4a4a4a; }
  .cell.und::after { content: ""; position: absolute; left: 4px; right: 4px; bottom: 0; height: 2px; background: #9fcfe8; }
  .cell.act.und::after { left: 0; right: 0; }
  .tkt { font: bold 17px "Liberation Sans", sans-serif; fill: #fff; }
  .tray { margin-left: auto; display: flex; align-items: center; color: #e4e4e4; height: 100%; position: relative; }
  .wtxt { font-size: 14px; margin-left: 9px; white-space: nowrap; width: 89px; }
  .tr2 { margin-left: 10px; }
  .tr3 { margin-left: 8px; }
  .tr4 { margin-left: 7px; }
  .eng { margin-left: 9px; font-size: 12px; width: 34px; }
  .clock { display: flex; flex-direction: column; align-items: center; font-size: 10.500px; line-height: 17px; width: 56px; }
  .note { margin-left: 15px; }
  .edge { width: 1px; height: 100%; background: #777; margin-left: 19px; margin-right: 5px; }
</style>
